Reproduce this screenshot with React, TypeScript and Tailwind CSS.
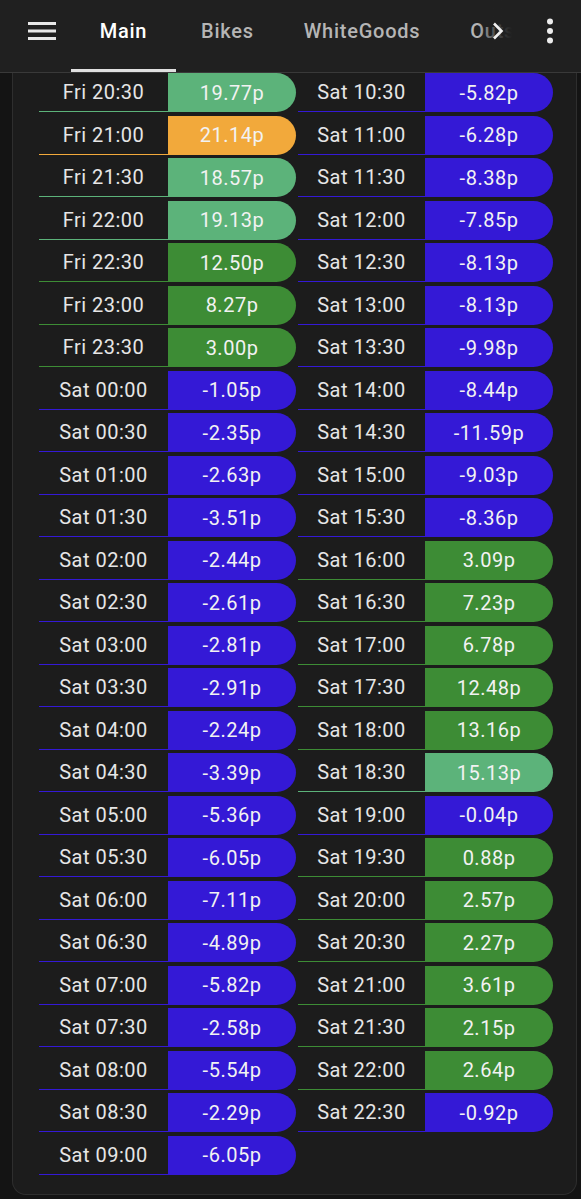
import React from "react";

type Slot = { time: string; price: number };

const left: Slot[] = [
  { time: "Fri 20:30", price: 19.77 },
  { time: "Fri 21:00", price: 21.14 },
  { time: "Fri 21:30", price: 18.57 },
  { time: "Fri 22:00", price: 19.13 },
  { time: "Fri 22:30", price: 12.5 },
  { time: "Fri 23:00", price: 8.27 },
  { time: "Fri 23:30", price: 3.0 },
  { time: "Sat 00:00", price: -1.05 },
  { time: "Sat 00:30", price: -2.35 },
  { time: "Sat 01:00", price: -2.63 },
  { time: "Sat 01:30", price: -3.51 },
  { time: "Sat 02:00", price: -2.44 },
  { time: "Sat 02:30", price: -2.61 },
  { time: "Sat 03:00", price: -2.81 },
  { time: "Sat 03:30", price: -2.91 },
  { time: "Sat 04:00", price: -2.24 },
  { time: "Sat 04:30", price: -3.39 },
  { time: "Sat 05:00", price: -5.36 },
  { time: "Sat 05:30", price: -6.05 },
  { time: "Sat 06:00", price: -7.11 },
  { time: "Sat 06:30", price: -4.89 },
  { time: "Sat 07:00", price: -5.82 },
  { time: "Sat 07:30", price: -2.58 },
  { time: "Sat 08:00", price: -5.54 },
  { time: "Sat 08:30", price: -2.29 },
  { time: "Sat 09:00", price: -6.05 },
];

const right: Slot[] = [
  { time: "Sat 10:30", price: -5.82 },
  { time: "Sat 11:00", price: -6.28 },
  { time: "Sat 11:30", price: -8.38 },
  { time: "Sat 12:00", price: -7.85 },
  { time: "Sat 12:30", price: -8.13 },
  { time: "Sat 13:00", price: -8.13 },
  { time: "Sat 13:30", price: -9.98 },
  { time: "Sat 14:00", price: -8.44 },
  { time: "Sat 14:30", price: -11.59 },
  { time: "Sat 15:00", price: -9.03 },
  { time: "Sat 15:30", price: -8.36 },
  { time: "Sat 16:00", price: 3.09 },
  { time: "Sat 16:30", price: 7.23 },
  { time: "Sat 17:00", price: 6.78 },
  { time: "Sat 17:30", price: 12.48 },
  { time: "Sat 18:00", price: 13.16 },
  { time: "Sat 18:30", price: 15.13 },
  { time: "Sat 19:00", price: -0.04 },
  { time: "Sat 19:30", price: 0.88 },
  { time: "Sat 20:00", price: 2.57 },
  { time: "Sat 20:30", price: 2.27 },
  { time: "Sat 21:00", price: 3.61 },
  { time: "Sat 21:30", price: 2.15 },
  { time: "Sat 22:00", price: 2.64 },
  { time: "Sat 22:30", price: -0.92 },
];

// price bands -> pill + underline colours
function band(p: number) {
  if (p < 0) return { pill: "bg-[#3419d6]", line: "border-[#3419d6]" };
  if (p < 15) return { pill: "bg-[#3d8c35]", line: "border-[#3d8c35]" };
  if (p < 21) return { pill: "bg-[#5cb37a]", line: "border-[#5cb37a]" };
  return { pill: "bg-[#f2a93b]", line: "border-[#f2a93b]" };
}

function Row({ slot }: { slot: Slot }) {
  const c = band(slot.price);
  return (
    <div className="flex h-[39px] mb-[3.5px] text-[20px] tracking-[0.5px]">
      <div className={`flex-1 flex items-center justify-center border-b ${c.line} text-[#e6e6e6]`}>
        {slot.time}
      </div>
      <div
        className={`w-[128px] flex items-center justify-center rounded-r-[20px] ${c.pill} text-[#f2f2f2]`}
      >
        {slot.price.toFixed(2)}p
      </div>
    </div>
  );
}

function Header() {
  return (
    <div className="h-[73px] flex bg-[#202020] border-b border-[#393939]">
      {/* Hamburger */}
      <div className="w-[71px] shrink-0 h-[62px] flex items-center pl-[28px]">
        <svg width="28" height="18" viewBox="0 0 28 18">
          <rect x="0" y="0" width="28" height="3" fill="#e8e8e8" />
          <rect x="0" y="7.5" width="28" height="3" fill="#e8e8e8" />
          <rect x="0" y="15" width="28" height="3" fill="#e8e8e8" />
        </svg>
      </div>

      {/* Tabs */}
      <div className="relative h-full w-[441px] shrink-0 overflow-hidden">
        <div className="flex h-full text-[20px] font-medium tracking-[0.75px] whitespace-nowrap">
          <div className="relative shrink-0 w-[105px] flex items-center justify-center pb-[10px] text-white">
            Main
            <div className="absolute left-0 right-0 bottom-0 h-[3px] bg-[#e0e0e0]" />
          </div>
          <div className="shrink-0 px-[25px] flex items-center pb-[10px] text-[#b5b5b5]">Bikes</div>
          <div className="shrink-0 px-[25px] flex items-center pb-[10px] text-[#b5b5b5]">WhiteGoods</div>
          <div className="shrink-0 px-[25px] flex items-center pb-[10px] text-[#b5b5b5]">Outside</div>
        </div>
        <div className="absolute right-0 top-0 h-[62px] w-[34px] flex items-center pl-[14px] bg-gradient-to-r from-[#202020]/0 via-[#202020]/70 to-[#202020]">
          <svg width="12" height="18" viewBox="0 0 12 18">
            <path d="M2 1.5 L9.5 9 L2 16.5" stroke="#f0f0f0" strokeWidth="2.6" fill="none" />
          </svg>
        </div>
      </div>

      {/* Overflow menu */}
      <div className="flex-1 h-[62px] flex items-center justify-center pl-[7px]">
        <svg width="8" height="26" viewBox="0 0 8 26">
          <circle cx="4" cy="3.5" r="3" fill="#ececec" />
          <circle cx="4" cy="13" r="3" fill="#ececec" />
          <circle cx="4" cy="22.5" r="3" fill="#ececec" />
        </svg>
      </div>
    </div>
  );
}

export default function App() {
  return (
    <div
      className="w-[581px] h-[1199px] bg-[#141414] flex flex-col overflow-hidden"
      style={{ fontFamily: "Roboto, 'Noto Sans', sans-serif" }}
    >
      <Header />
      <div className="flex flex-1">
        <div className="w-[12px]" />
        <div className="w-[565px] mb-[4px] bg-[#1c1c1c] border-l border-r border-b border-[#2e2e2e] rounded-b-[14px] pl-[26px]">
          <div className="flex gap-[2px]">
            <div className="w-[257px]">
              {left.map((s) => (
                <Row key={s.time} slot={s} />
              ))}
            </div>
            <div className="w-[255px]">
              {right.map((s) => (
                <Row key={s.time} slot={s} />
              ))}
            </div>
          </div>
        </div>
      </div>
    </div>
  );
}
